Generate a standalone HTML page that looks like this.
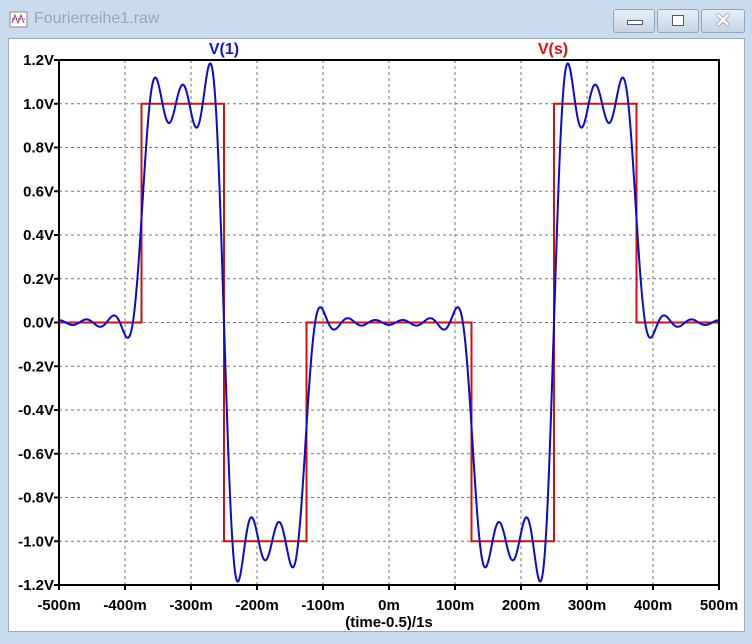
<!DOCTYPE html>
<html><head><style>
html,body{margin:0;padding:0}
body{width:752px;height:644px;background:#c9dbef;position:relative;overflow:hidden;font-family:"Liberation Sans",sans-serif}
.title{position:absolute;left:34px;top:10px;font-size:16px;color:#9aa4b0}
.btn{position:absolute;top:9px;height:22px;border:1px solid #8fa3bb;border-radius:3px;background:linear-gradient(#e8f0f9,#c5d4e6)}
.client{position:absolute;left:8px;top:38px;width:737px;height:594px;background:#fff;border:1px solid #9aaabc;box-sizing:border-box}
</style></head><body>
<svg style="position:absolute;left:9px;top:11px" width="20" height="18"><rect x="1" y="1" width="17" height="15" fill="#fff" stroke="#888"/><path d="M3 12 L6 4 L9 12 L12 4 L15 12" stroke="#c33" fill="none"/><path d="M3 8 L16 8" stroke="#33c" stroke-dasharray="1,1"/></svg>
<div class="title">Fourierreihe1.raw</div>
<div class="btn" style="left:613px;width:40px"><div style="position:absolute;left:13px;top:10px;width:14px;height:3px;background:#fff;border:1px solid #556"></div></div>
<div class="btn" style="left:657px;width:40px"><div style="position:absolute;left:14px;top:5px;width:10px;height:9px;background:#fff;border:1px solid #556"></div></div>
<div class="btn" style="left:701px;width:42px;font-size:20px;color:#fff;text-align:center;line-height:22px;font-weight:bold;text-shadow:0 0 1px #334,0 0 1px #334">✕</div>
<div class="client"></div>
<svg id="p" style="position:absolute;left:0;top:0" width="752" height="644" font-family="Liberation Sans" font-weight="bold" font-size="15"></svg>
<script>
var s='',X0=59,X1=719,Y0=60,Y1=585;
function X(t){return X0+(t+0.5)*(X1-X0)}
function Y(v){return Y0+(1.2-v)/2.4*(Y1-Y0)}
for(var i=1;i<10;i++){var x=X0+i*66;s+='<line x1="'+x+'" y1="'+Y0+'" x2="'+x+'" y2="'+Y1+'" stroke="#777" stroke-dasharray="3,3"/>';}
for(var i=1;i<12;i++){var y=Y0+i*43.75;s+='<line x1="'+X0+'" y1="'+y+'" x2="'+X1+'" y2="'+y+'" stroke="#777" stroke-dasharray="3,3"/>';}
for(var i=0;i<=12;i++){var v=1.2-i*0.2,y=Y0+i*43.75;var l=(Math.abs(v)<1e-9?'0.0':v.toFixed(1))+'V';
s+='<line x1="'+(X0-5)+'" y1="'+y+'" x2="'+X0+'" y2="'+y+'" stroke="#000" stroke-width="2"/><text x="'+(X0-5)+'" y="'+(y+5)+'" text-anchor="end">'+l+'</text>';}
var xl=['-500m','-400m','-300m','-200m','-100m','0m','100m','200m','300m','400m','500m'];
for(var i=0;i<=10;i++){var x=X0+i*66;s+='<line x1="'+x+'" y1="'+Y1+'" x2="'+x+'" y2="'+(Y1+5)+'" stroke="#000" stroke-width="2"/><text x="'+x+'" y="'+(Y1+25)+'" text-anchor="middle">'+xl[i]+'</text>';}
s+='<text x="389" y="627" text-anchor="middle">(time-0.5)/1s</text>';
s+='<text x="224" y="54" text-anchor="middle" fill="#1414d0" font-size="16">V(1)</text><text x="553" y="54" text-anchor="middle" fill="#e01010" font-size="16">V(s)</text>';
var pts=[[-.5,0],[-.375,0],[-.375,1],[-.25,1],[-.25,-1],[-.125,-1],[-.125,0],[.125,0],[.125,-1],[.25,-1],[.25,1],[.375,1],[.375,0],[.5,0]];
var d='M'+pts.map(function(p){return X(p[0]).toFixed(1)+' '+Y(p[1]).toFixed(1)}).join(' L');
s+='<path d="'+d+'" fill="none" stroke="#cc1111" stroke-width="2"/>';
var N=24,a=[];
function sn(n,x){return Math.sin(2*Math.PI*n*x)}
for(var n=1;n<=N;n++){a[n]=4/(2*Math.PI*n)*(-(sn(n,.25)-sn(n,.125))+(sn(n,.375)-sn(n,.25)));}
var bd='';
for(var k=0;k<=1320;k++){var t=-.5+k/1320,v=0;for(var n=1;n<=N;n++)v+=a[n]*Math.cos(2*Math.PI*n*t);
bd+=(k?'L':'M')+X(t).toFixed(1)+' '+Y(v).toFixed(1);}
s+='<path d="'+bd+'" fill="none" stroke="#0a0acc" stroke-width="2"/>';
s+='<rect x="'+X0+'" y="'+Y0+'" width="'+(X1-X0)+'" height="'+(Y1-Y0)+'" fill="none" stroke="#000" stroke-width="2"/>';
document.getElementById('p').innerHTML=s;
</script>
</body></html>
